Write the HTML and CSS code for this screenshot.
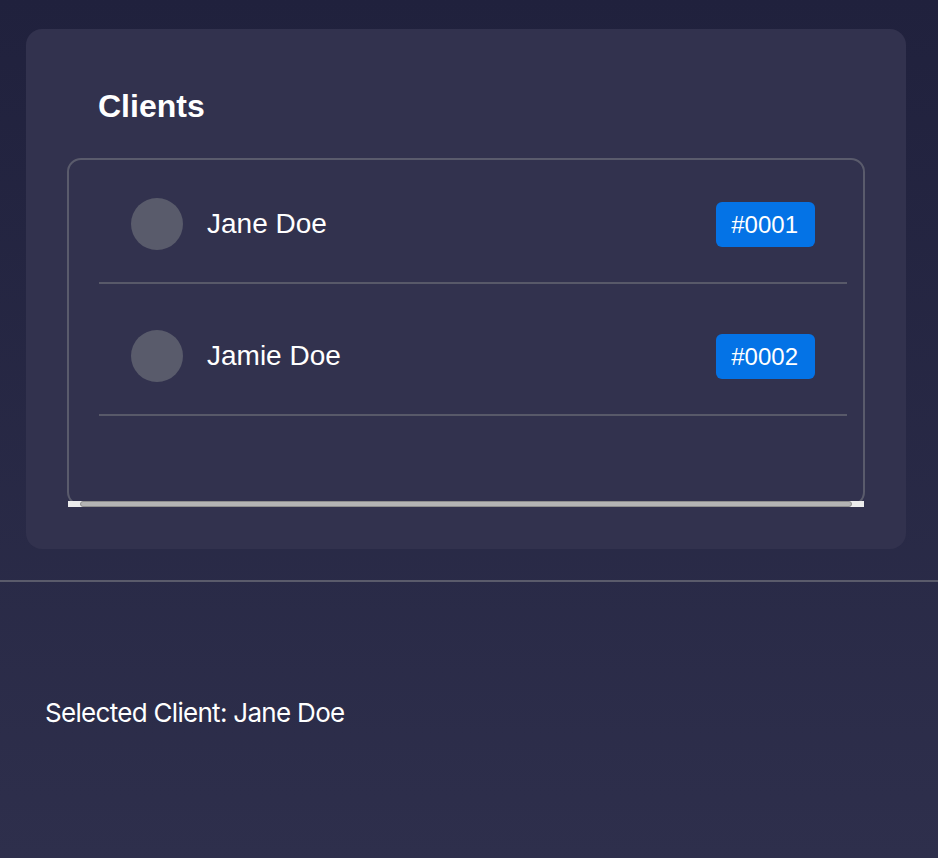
FILE: index.html
```html
<!DOCTYPE html>
<html>
<head>
<meta charset="utf-8">
<link rel="stylesheet" href="styles.css">
</head>
<body>
<section class="card">
  <h2 class="title">Clients</h2>
  <div class="list">
    <div class="row">
      <span class="avatar"></span>
      <span class="name">Jane Doe</span>
      <span class="badge">#0001</span>
    </div>
    <div class="row">
      <span class="avatar"></span>
      <span class="name">Jamie Doe</span>
      <span class="badge">#0002</span>
    </div>
    <div class="scrollbar"><div class="thumb"></div></div>
  </div>
</section>
<hr class="sep">
<p class="selected">Selected Client: Jane Doe</p>
</body>
</html>
```
FILE: styles.css
```css
html, body {
  height: 100%;
}
body {
  margin: 0;
  padding: 29px 32px 0 26px;
  box-sizing: border-box;
  background: linear-gradient(#20213d, #2e2f4c);
  font-family: "Liberation Sans", Arial, sans-serif;
  color: #fff;
}
.card {
  background: #32324e;
  border-radius: 16px;
  padding: 41px 41px 43px 41px;
  box-sizing: border-box;
  height: 520px;
}
.title {
  margin: 18px 0 33px 31px;
  font-size: 32px;
  line-height: 37px;
  font-weight: 700;
}
.list {
  position: relative;
  box-sizing: border-box;
  height: 348px;
  border: 2px solid #5a5b6c;
  border-radius: 14px;
  display: flex;
  flex-direction: column;
}
.row {
  display: flex;
  align-items: center;
  margin: 7px 16px 8px 30px;
  padding: 31px 32px 32px;
  border-bottom: 2px solid #585969;
}
.avatar {
  width: 52px;
  height: 52px;
  border-radius: 50%;
  background: #595b6b;
  flex: none;
}
.name {
  margin-left: 24px;
  font-size: 28px;
  flex: 1;
}
.badge {
  background: #0473e6;
  border-radius: 6px;
  font-size: 24px;
  line-height: 27px;
  padding: 9px 17px 9px 15px;
}
.scrollbar {
  position: absolute;
  left: -1px;
  right: -1px;
  bottom: -3px;
  height: 6px;
  background: #ececec;
}
.thumb {
  position: absolute;
  left: 12px;
  right: 12px;
  top: 0;
  bottom: 0;
  box-sizing: border-box;
  background: #b4b4b4;
  border: 1px solid #8e8e8e;
  border-radius: 3px;
}
.sep {
  margin: 31px -32px 0 -26px;
  border: 0;
  height: 2px;
  background: #5a5b6b;
}
.selected {
  margin: 115px 0 0 19px;
  font-family: Inter, "Liberation Sans", sans-serif;
  font-size: 26px;
  letter-spacing: -0.7px;
  color: #fff;
}
```
